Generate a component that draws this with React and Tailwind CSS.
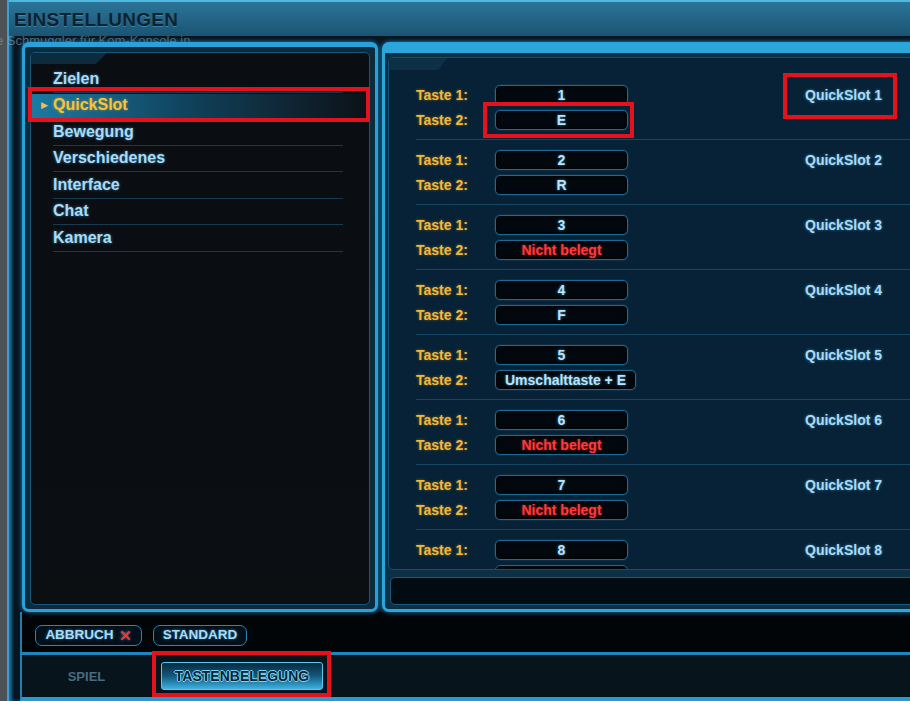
import React from "react";

const groups = [
  { n: 1, k1: "1", k2: "E" },
  { n: 2, k1: "2", k2: "R" },
  { n: 3, k1: "3", k2: null },
  { n: 4, k1: "4", k2: "F" },
  { n: 5, k1: "5", k2: "Umschalttaste + E", wide: true },
  { n: 6, k1: "6", k2: null },
  { n: 7, k1: "7", k2: null },
  { n: 8, k1: "8", k2: "", last: true },
];

const navItems = ["Zielen", "QuickSlot", "Bewegung", "Verschiedenes", "Interface", "Chat", "Kamera"];

function KeyBox({ value, wide }) {
  const empty = value === null;
  return (
    <div
      className={`${wide ? "w-[141px]" : "w-[133px]"} h-[20px] shrink-0 rounded-[5px] border border-[#1f6a94] bg-[#02080d] shadow-[inset_0_0_4px_rgba(0,0,0,0.9),0_0_2px_rgba(40,140,200,0.4)] flex items-center justify-center text-[14px] font-bold leading-none whitespace-nowrap ${
        empty
          ? "text-[#ff3a3a] [text-shadow:0_0_3px_rgba(255,40,40,0.6)]"
          : "text-[#b9e4fb] [text-shadow:0_0_3px_rgba(90,190,255,0.7)]"
      }`}
    >
      {empty ? "Nicht belegt" : value}
    </div>
  );
}

function Group({ g, first }) {
  const rows = [["Taste 1:", g.k1, false]];
  if (!g.last) rows.push(["Taste 2:", g.k2, g.wide]);
  return (
    <div className={`ml-[27px] h-[65px] shrink-0 border-t ${first ? "border-transparent" : "border-[#164762]"} pt-[9px] flex`}>
      <div className="w-[389px] shrink-0 flex flex-col gap-[3px]">
        {rows.map(([label, v, w]) => (
          <div key={label} className="h-[22px] flex items-center">
            <div className="w-[79px] shrink-0 text-[14px] font-bold text-[#f1b93b] [text-shadow:0_0_3px_rgba(240,170,40,0.5)]">{label}</div>
            <KeyBox value={v} wide={w} />
          </div>
        ))}
        {g.last && (
          <div className="h-[22px] flex items-center pl-[79px]">
            <div className="w-[133px] h-[20px] rounded-[5px] border border-[#1f6a94] bg-[#02080d]" />
          </div>
        )}
      </div>
      <div className="h-[22px] flex items-center text-[14px] font-bold text-[#a9dcf4] [text-shadow:0_0_3px_rgba(90,190,255,0.6)] whitespace-nowrap">
        QuickSlot {g.n}
      </div>
    </div>
  );
}

export default function App() {
  return (
    <div className="relative w-[910px] h-[701px] overflow-hidden bg-[#4d5257] flex font-['Liberation_Sans',Arial,sans-serif]">
      <div className="ml-[7px] w-[903px] shrink-0 h-full flex flex-col bg-[#071520] border-l-[2px] border-[#3a9fd2] shadow-[inset_3px_0_3px_#1d6e98]">
        {/* Title bar */}
        <div className="relative h-[36px] shrink-0 border-t-[2px] border-[#4fb8e0] bg-gradient-to-b from-[#2b7599] to-[#1b5472] pl-[5px] flex items-center">
          <div className="text-[19px] font-bold tracking-[0.3px] text-[#0c2230] [text-shadow:0_1px_0_rgba(120,200,235,0.35)] pt-[2px]">
            EINSTELLUNGEN
          </div>
        </div>
        <div className="absolute left-[-4px] top-[31px] text-[13px] text-[#9fb0bc] opacity-50 whitespace-nowrap">
          e Schmuggler für Kom-Konsole in
        </div>

        {/* Panels */}
        <div className="relative z-10 h-[576px] shrink-0 pt-[6px] pl-[13px] flex gap-[4px]">
          {/* Left panel */}
          <div className="w-[356px] shrink-0 h-[570px] rounded-[7px] border-[3px] border-t-[5px] border-[#2aa1d8] bg-[#0c2c3e] p-[5px] pb-[4px] shadow-[0_0_5px_#1b88c0]">
            <div className="relative h-full rounded-[5px] border border-[#17587a] bg-gradient-to-b from-[#0a0e12] to-[#0b0f12] overflow-hidden">
              <div className="absolute left-0 top-0 w-[76px] h-[11px] bg-[#0c2c3e] [clip-path:polygon(0_0,100%_0,85%_100%,0_100%)]" />
              <div className="pt-[13px] flex flex-col">
                {navItems.map((item, i) => {
                  const sel = i === 1;
                  return (
                    <div key={item} className="relative h-[26.5px] flex items-end">
                      {sel && (
                        <div className="absolute left-0 top-[1px] w-[334px] h-[24px] bg-gradient-to-r from-[#1b7aa4] via-[#0f3f58] to-[#0b1218]" />
                      )}
                      <div className="relative ml-[22px] w-[290px] h-full border-b border-[#163a50] flex items-center">
                        {sel && <span className="absolute left-[-12px] text-[9px] text-[#f3c244]">▶</span>}
                        <span
                          className={`text-[16px] font-bold ${
                            sel
                              ? "text-[#f5c33d] [text-shadow:0_0_3px_rgba(240,170,40,0.6)]"
                              : "text-[#a9dcf5] [text-shadow:0_0_3px_rgba(90,190,255,0.6)]"
                          }`}
                        >
                          {item}
                        </span>
                      </div>
                    </div>
                  );
                })}
              </div>
            </div>
          </div>

          {/* Right panel */}
          <div className="w-[560px] shrink-0 h-[570px] rounded-[7px] border-[3px] border-t-[11px] border-[#2aa6da] bg-[#0c3147] pt-[4px] pl-[3px] pb-[4px] shadow-[0_0_5px_#1b88c0] flex flex-col gap-[7px]">
            <div className="relative h-[513px] shrink-0 rounded-[5px] border border-[#15506f] bg-[#072236] overflow-hidden">
              <div className="absolute left-0 top-0 w-[58px] h-[12px] bg-[#0c3147] [clip-path:polygon(0_0,100%_0,85%_100%,0_100%)]" />
              <div className="pt-[16px] flex flex-col">
                {groups.map((g, i) => (
                  <Group key={g.n} g={g} first={i === 0} />
                ))}
              </div>
            </div>
            <div className="h-[28px] shrink-0 ml-[2px] rounded-[5px] border border-[#1a5a7c] bg-[#020b12]" />
          </div>
        </div>

        {/* Buttons bar */}
        <div className="h-[40px] shrink-0 ml-[11px] bg-[#020507] border-l-[2px] border-[#1f7fb2] pl-[13px] pt-[13px] flex gap-[11px]">
          <div className="w-[107px] h-[21px] rounded-[7px] border-[1.5px] border-[#2c84b6] bg-[#03101a] flex items-center justify-center gap-[5px] text-[13.5px] font-bold text-[#a9dcf7] [text-shadow:0_0_3px_rgba(90,190,255,0.6)]">
            ABBRUCH <span className="text-[#ee3535] text-[15px] leading-none">✕</span>
          </div>
          <div className="w-[94px] h-[21px] rounded-[7px] border-[1.5px] border-[#2c84b6] bg-[#03101a] flex items-center justify-center text-[13.5px] font-bold text-[#a9dcf7] [text-shadow:0_0_3px_rgba(90,190,255,0.6)]">
            STANDARD
          </div>
        </div>

        {/* Tab bar */}
        <div className="h-[49px] shrink-0 ml-[11px] border-t-[3px] border-t-[#1f86bd] border-b-[4px] border-b-[#2a9ad0] border-l-[2px] border-l-[#1f7fb2] bg-[#08141c] flex items-center">
          <div className="w-[129px] text-center text-[13px] font-bold text-[#4a6a80] pt-[1px]">SPIEL</div>
          <div className="ml-[10px] w-[162px] h-[28px] rounded-[3px] border border-[#5cc8f0] bg-gradient-to-b from-[#0a2a3f] via-[#13587c] to-[#3cb3e4] flex items-center justify-center text-[14px] font-bold text-[#0b2433] [text-shadow:1px_0_0_#7ad4f6,-1px_0_0_#7ad4f6,0_1px_0_#7ad4f6,0_-1px_0_#7ad4f6]">
            TASTENBELEGUNG
          </div>
        </div>
      </div>

      {/* Red annotation boxes */}
      <div className="absolute left-[28px] top-[87px] w-[342px] h-[35px] border-[4px] border-[#e3121c] z-20" />
      <div className="absolute left-[483px] top-[102px] w-[151px] h-[36px] border-[4px] border-[#e3121c] z-20" />
      <div className="absolute left-[783px] top-[73px] w-[114px] h-[46px] border-[4px] border-[#e3121c] z-20" />
      <div className="absolute left-[152px] top-[651px] w-[179px] h-[46px] border-[4px] border-[#e3121c] z-20" />
    </div>
  );
}
